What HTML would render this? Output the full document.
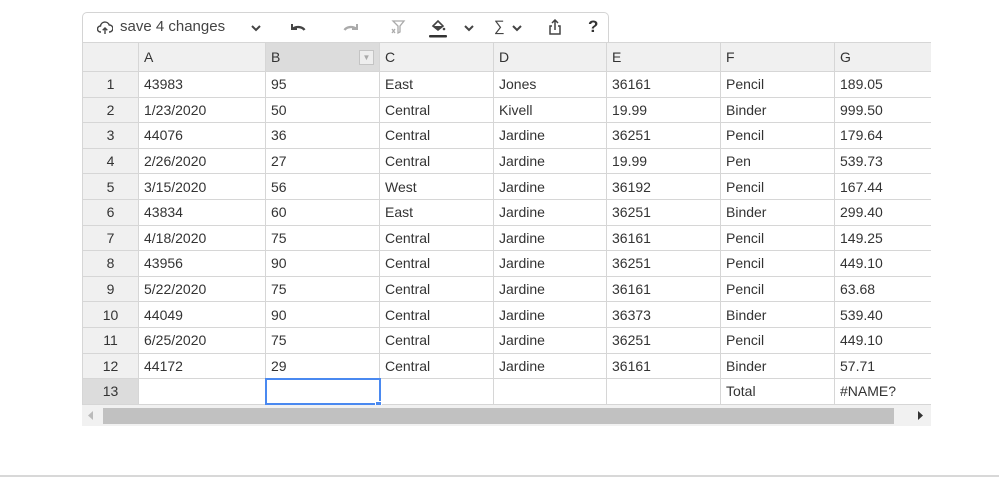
<!DOCTYPE html>
<html><head><meta charset="utf-8"><style>
*{box-sizing:border-box;margin:0;padding:0}
body{width:999px;height:477px;background:#fff;font-family:"Liberation Sans",sans-serif;position:relative;overflow:hidden;color:#333}
.tb{position:absolute;left:82px;top:12px;width:527px;height:31px;border:1px solid #d4d4d4;border-bottom:none;border-radius:5px 5px 0 0;background:#fff}
.tb span,.tb svg{position:absolute}
.grid{position:absolute;left:82px;top:42px;width:849px;height:364px;overflow:hidden}
table{border-collapse:collapse;table-layout:fixed;font-size:14px;width:852px}
td{border:1px solid #d6d6d6;height:25.6px;padding:0 0 0 5px;white-space:nowrap;color:#333;overflow:hidden}
tr.h td{height:29px;background:#f0f0f0;color:#333}
td.r{background:#f0f0f0;text-align:center;padding:0}
.bot{position:absolute;left:0;top:475px;width:999px;height:2px;background:#d8d8d8}
.sb{position:absolute;left:82px;top:405px;width:849px;height:21px;background:#f1f1f1}
</style></head><body>
<div class="tb">
<svg style="left:14px;top:7px" width="16" height="16" viewBox="0 0 16 16" fill="none" stroke="#444" stroke-width="1.4"><path d="M4 12H3.5a3 3 0 0 1 0-6 4.5 4.5 0 0 1 8.7-1 3 3 0 0 1 .3 7H12"/><path d="M8 14V8M5.7 10.2 8 8l2.3 2.2"/></svg>
<span style="left:37px;top:5px;font-size:15px;color:#444">save 4 changes</span>
<svg style="left:168px;top:11px" width="10" height="8" viewBox="0 0 10 8"><path d="M1 2l4 4 4-4" stroke="#444" stroke-width="2" fill="none"/></svg>
<svg style="left:205px;top:8px" width="20" height="14" viewBox="0 0 20 14"><path d="M4 3v5h5" stroke="#444" stroke-width="2" fill="none"/><path d="M4.5 8a7 5 0 0 1 12 1" stroke="#444" stroke-width="2.3" fill="none"/></svg>
<svg style="left:258px;top:8px" width="20" height="14" viewBox="0 0 20 14"><path d="M16 3v5h-5" stroke="#aaa" stroke-width="2" fill="none"/><path d="M15.5 8a7 5 0 0 0-12 1" stroke="#aaa" stroke-width="2.3" fill="none"/></svg>
<svg style="left:307px;top:6px" width="16" height="16" viewBox="0 0 16 16" fill="none" stroke="#aaa" stroke-width="1.3"><path d="M3 2h11l-4 5v6l-2 1V7z"/><path d="M2 10l3 4M5 10l-3 4"/></svg>
<svg style="left:346px;top:5px" width="18" height="20" viewBox="0 0 18 20"><path d="M4 8l5-5 5 5-5 4z" stroke="#444" stroke-width="1.6" fill="none"/><path d="M4 8h10l-5 4z" fill="#444"/><circle cx="15" cy="11" r="1.3" fill="#444"/><rect x="0" y="17" width="18" height="2.5" rx="1" fill="#333"/></svg>
<svg style="left:381px;top:11px" width="10" height="8" viewBox="0 0 10 8"><path d="M1 2l4 4 4-4" stroke="#444" stroke-width="2" fill="none"/></svg>
<span style="left:411px;top:5px;font-size:15px;color:#444">∑</span>
<svg style="left:429px;top:11px" width="10" height="8" viewBox="0 0 10 8"><path d="M1 2l4 4 4-4" stroke="#444" stroke-width="2" fill="none"/></svg>
<svg style="left:465px;top:6px" width="14" height="16" viewBox="0 0 14 16" fill="none" stroke="#444" stroke-width="1.5"><path d="M4 7H2v8h10V7h-2M7 11V1M4 4l3-3 3 3"/></svg>
<span style="left:505px;top:4px;font-size:17px;font-weight:bold;color:#333">?</span>
</div>
<div class="grid"><table>
<colgroup><col style="width:56px"><col style="width:127px"><col style="width:114px"><col style="width:114px"><col style="width:113px"><col style="width:114px"><col style="width:114px"><col style="width:100px"></colgroup>
<tr class="h"><td></td><td>A</td><td style="background:#dcdcdc;position:relative">B<span style="position:absolute;right:5px;top:7px;width:15px;height:15px;border:1px solid #c4c4c4;background:#eee;font-size:8px;color:#aaa;text-align:center;line-height:13px">▼</span></td><td>C</td><td>D</td><td>E</td><td>F</td><td>G</td></tr>
<tr><td class="r">1</td><td>43983</td><td>95</td><td>East</td><td>Jones</td><td>36161</td><td>Pencil</td><td>189.05</td></tr>
<tr><td class="r">2</td><td>1/23/2020</td><td>50</td><td>Central</td><td>Kivell</td><td>19.99</td><td>Binder</td><td>999.50</td></tr>
<tr><td class="r">3</td><td>44076</td><td>36</td><td>Central</td><td>Jardine</td><td>36251</td><td>Pencil</td><td>179.64</td></tr>
<tr><td class="r">4</td><td>2/26/2020</td><td>27</td><td>Central</td><td>Jardine</td><td>19.99</td><td>Pen</td><td>539.73</td></tr>
<tr><td class="r">5</td><td>3/15/2020</td><td>56</td><td>West</td><td>Jardine</td><td>36192</td><td>Pencil</td><td>167.44</td></tr>
<tr><td class="r">6</td><td>43834</td><td>60</td><td>East</td><td>Jardine</td><td>36251</td><td>Binder</td><td>299.40</td></tr>
<tr><td class="r">7</td><td>4/18/2020</td><td>75</td><td>Central</td><td>Jardine</td><td>36161</td><td>Pencil</td><td>149.25</td></tr>
<tr><td class="r">8</td><td>43956</td><td>90</td><td>Central</td><td>Jardine</td><td>36251</td><td>Pencil</td><td>449.10</td></tr>
<tr><td class="r">9</td><td>5/22/2020</td><td>75</td><td>Central</td><td>Jardine</td><td>36161</td><td>Pencil</td><td>63.68</td></tr>
<tr><td class="r">10</td><td>44049</td><td>90</td><td>Central</td><td>Jardine</td><td>36373</td><td>Binder</td><td>539.40</td></tr>
<tr><td class="r">11</td><td>6/25/2020</td><td>75</td><td>Central</td><td>Jardine</td><td>36251</td><td>Pencil</td><td>449.10</td></tr>
<tr><td class="r">12</td><td>44172</td><td>29</td><td>Central</td><td>Jardine</td><td>36161</td><td>Binder</td><td>57.71</td></tr>
<tr><td class="r" style="background:#dcdcdc">13</td><td></td><td style="border:2px solid #4a89f0"></td><td></td><td></td><td></td><td>Total</td><td>#NAME?</td></tr>
</table></div>
<div style="position:absolute;left:375px;top:401px;width:7px;height:7px;background:#4a89f0;border:1px solid #fff"></div>
<div class="sb">
<div style="position:absolute;left:21px;top:3px;width:791px;height:16px;background:#c1c1c1"></div>
<svg style="position:absolute;left:6px;top:6px" width="6" height="9"><path d="M5 0v9L0 4.5z" fill="#bbb"/></svg>
<svg style="position:absolute;left:836px;top:6px" width="6" height="9"><path d="M0 0v9l5-4.5z" fill="#333"/></svg>
</div>
<div class="bot"></div>
</body></html>
